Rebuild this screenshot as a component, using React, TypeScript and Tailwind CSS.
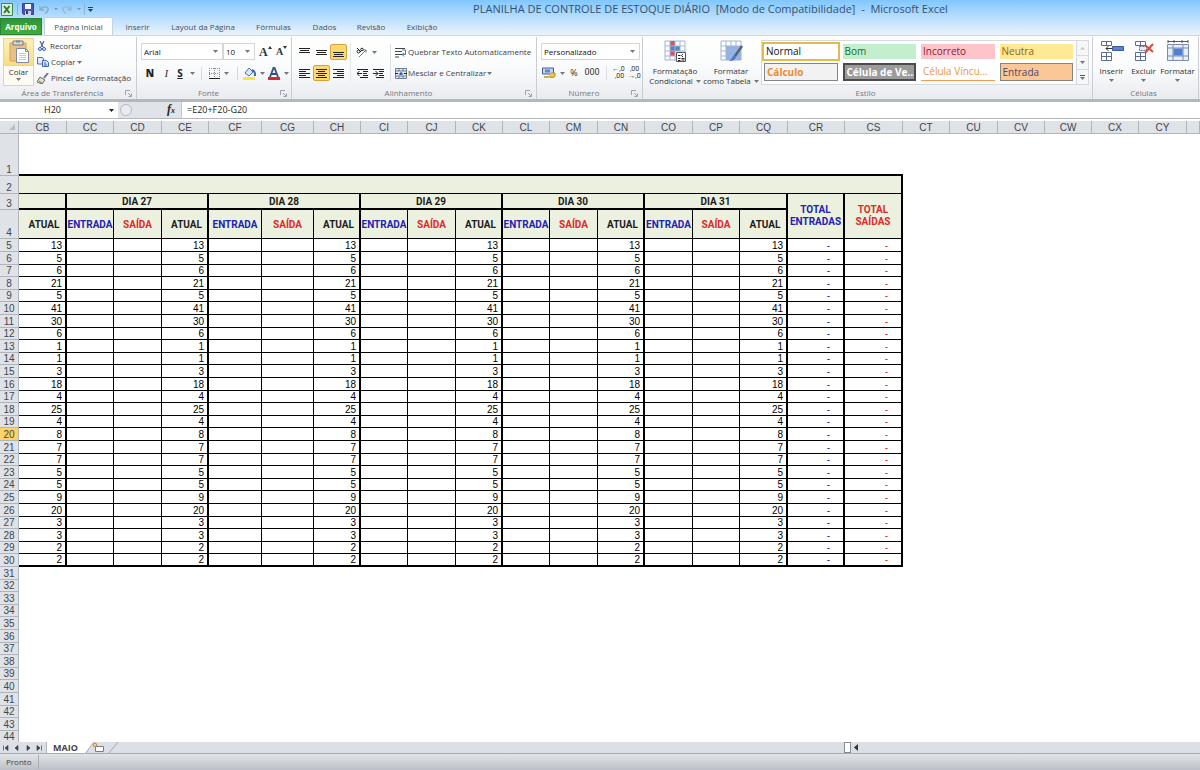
import React from "react";

type Kid = { children?: React.ReactNode };

const COLUMNS: [string, string][] = [
  ["CB", "w-[48px]"], ["CC", "w-[47px]"], ["CD", "w-[48px]"], ["CE", "w-[47px]"],
  ["CF", "w-[53px]"], ["CG", "w-[52px]"], ["CH", "w-[47px]"], ["CI", "w-[47px]"],
  ["CJ", "w-[48px]"], ["CK", "w-[47px]"], ["CL", "w-[47px]"], ["CM", "w-[48px]"],
  ["CN", "w-[47px]"], ["CO", "w-[48px]"], ["CP", "w-[47px]"], ["CQ", "w-[48px]"],
  ["CR", "w-[57px]"], ["CS", "w-[58px]"], ["CT", "w-[47px]"], ["CU", "w-[48px]"],
  ["CV", "w-[47px]"], ["CW", "w-[47px]"], ["CX", "w-[47px]"], ["CY", "w-[48px]"],
];

const STOCK = [13, 5, 6, 21, 5, 41, 30, 6, 1, 1, 3, 18, 4, 25, 4, 8, 7, 7, 5, 5, 9, 20, 3, 3, 2, 2];
const ROW_H = ["h-[13px]", "h-[13px]", "h-[12px]", "h-[13px]", "h-[12px]"];
const DAYS = [27, 28, 29, 30, 31];
const EMPTY_ROWS = Array.from({ length: 14 }, (_, i) => 31 + i);

function Caret({ dark = false }: { dark?: boolean }) {
  return (
    <svg width="5" height="3" viewBox="0 0 5 3" className="shrink-0">
      <path d="M0 0h5L2.5 3z" fill={dark ? "#222" : "#777"} />
    </svg>
  );
}

function Launcher() {
  return (
    <svg width="7" height="7" viewBox="0 0 7 7">
      <path d="M.5 5V.5H5M3 3l3 3M6.500 3.500v3h-3" fill="none" stroke="#9da2a8" />
    </svg>
  );
}

function Group({ label, width, launcher, children }: Kid & { label: string; width: string; launcher?: boolean }) {
  return (
    <section className={"flex shrink-0 flex-col border-r border-[#c9cdd2] " + width}>
      <div className="flex flex-1 items-stretch">{children}</div>
      <div className="flex h-[12px] items-center pr-[4px] text-[#74787e]">
        <h2 className="flex-1 text-center leading-[12px]">{label}</h2>
        {launcher && (
          <button aria-label={"Opções de " + label}>
            <Launcher />
          </button>
        )}
      </div>
    </section>
  );
}

function IconBtn({ label, active, width = "w-[17px]", children }: Kid & { label: string; active?: boolean; width?: string }) {
  return (
    <button
      aria-label={label}
      className={
        "flex h-[16px] shrink-0 items-center justify-center gap-1 rounded-[2px] " + width +
        (active ? " border border-[#d5a33c] bg-[#fdd96b]" : "")
      }
    >
      {children}
    </button>
  );
}

function Lines({ d }: { d: string }) {
  return (
    <svg width="11" height="10" viewBox="0 0 11 10">
      <path d={d} stroke="#222" strokeWidth="1" fill="none" />
    </svg>
  );
}

function Picker({ label, value, width }: { label: string; value: string; width: string }) {
  return (
    <div className={"relative h-[17px] border border-[#d3d6da] bg-white " + width}>
      <select aria-label={label} className="h-full w-full appearance-none bg-transparent pl-[2px] text-[#111] outline-none">
        <option>{value}</option>
      </select>
      <span className="pointer-events-none absolute top-[6px] right-[4px] flex">
        <Caret />
      </span>
    </div>
  );
}

function Grid3({ children }: Kid) {
  return (
    <svg width="24" height="24" viewBox="0 0 24 24">
      <path d="M2 1h20v19H2z" fill="#fff" stroke="#9fb4d6" />
      {children}
    </svg>
  );
}

function TitleBar() {
  return (
    <header className="flex h-[18px] items-center pl-[1px]">
      <svg width="12" height="13" viewBox="0 0 12 13">
        <path d="M.5.5h11v12H.5z" fill="#dcefd8" stroke="#3f8a45" />
        <path d="M3 3l5.500 7M8.500 3L3 10" stroke="#2c7c35" strokeWidth="2" />
      </svg>
      <i className="mx-[4px] h-[12px] w-px bg-[#8fb3d3]" />
      <button aria-label="Salvar">
        <svg width="12" height="12" viewBox="0 0 12 12">
          <path d="M.5.500h11v11h-10l-1-1z" fill="#4a55b0" stroke="#36408c" />
          <path d="M3 1h6v5H3z" fill="#f2f5fb" />
          <path d="M3 8h6v4H3z" fill="#c9cfe6" />
          <path d="M4 8h2v3H4z" fill="#2c3474" />
        </svg>
      </button>
      <div className="ml-[5px] flex items-center gap-[4px]">
        <button aria-label="Desfazer" className="flex items-center gap-[5px]">
          <svg width="10" height="9" viewBox="0 0 10 9">
            <path d="M2 4c3-4 8-2 7 1-.5 2-2 3-3 3.500M1 1v4h4" fill="none" stroke="#8ea9c8" strokeWidth="1.500" />
          </svg>
          <svg width="4" height="2"><path d="M0 0h4L2 2z" fill="#7d93ad" /></svg>
        </button>
        <button aria-label="Refazer" className="flex items-center gap-[5px]">
          <svg width="10" height="9" viewBox="0 0 10 9">
            <path d="M8 4C5 0 0 2 1 5c.5 2 2 3 3 3.500M9 1v4H5" fill="none" stroke="#9fb6d0" strokeWidth="1.500" />
          </svg>
          <svg width="4" height="2"><path d="M0 0h4L2 2z" fill="#7d93ad" /></svg>
        </button>
      </div>
      <i className="mx-[3px] h-[12px] w-px bg-[#8fb3d3]" />
      <button aria-label="Personalizar barra">
        <svg width="5" height="5"><path d="M0 .5h5" stroke="#23405e" /><path d="M0 2h5L2.500 5z" fill="#23405e" /></svg>
      </button>
      <h1 className="flex-1 pl-[128px] text-center text-[11px] leading-[18px] whitespace-pre text-[#35506e]">
        PLANILHA DE CONTROLE DE ESTOQUE DIÁRIO  [Modo de Compatibilidade]  -  Microsoft Excel
      </h1>
    </header>
  );
}

function Tabs() {
  const items: [string, string][] = [
    ["Inserir", "w-[47px]"], ["Layout da Página", "w-[84px]"], ["Fórmulas", "w-[57px]"],
    ["Dados", "w-[45px]"], ["Revisão", "w-[48px]"], ["Exibição", "w-[54px]"],
  ];
  return (
    <nav className="flex h-[18px] items-end border-b border-[#ccd6e0] text-[#4a4f57]">
      <button className="h-[17px] w-[42px] border border-[#2a8532] bg-linear-to-b from-[#2f9439] to-[#3fae3a] font-bold text-white">
        Arquivo
      </button>
      <button className="mr-px ml-[2px] h-[18px] w-[69px] rounded-t-[2px] border border-b-0 border-[#c4d2e0] bg-white">
        Página Inicial
      </button>
      {items.map(([name, w]) => (
        <button key={name} className={"h-[17px] " + w}>
          {name}
        </button>
      ))}
    </nav>
  );
}

function ClipboardGroup() {
  return (
    <Group label="Área de Transferência" width="w-[137px]" launcher>
      <div className="flex w-full gap-[3px] pt-[1px] pl-[3px]">
        <button className="flex h-[48px] w-[31px] flex-col items-center border border-[#ecd391] bg-[#fdfbf3] text-[#333]">
          <span className="flex h-[27px] w-full justify-center border-b border-[#ecd391] bg-linear-to-b from-[#fdf0c0] to-[#fbdd7c] pt-px">
            <svg width="22" height="24" viewBox="0 0 22 24">
              <path d="M2 3h16v18H2z" fill="#e8c184" stroke="#cfa468" />
              <path d="M5 1h10v4H5z" fill="#d7d9de" stroke="#777c86" />
              <path d="M8 .5h4v2H8z" fill="#85898f" />
              <path d="M8.500 8.500h9l3 3v11h-12z" fill="#fff" stroke="#7d8aa8" />
              <path d="M17.500 8.500v3h3" fill="none" stroke="#7d8aa8" />
              <path d="M11 13.500h7M11 15.500h7M11 17.500h7M11 19.500h7" stroke="#c3cde0" />
            </svg>
          </span>
          <span className="leading-[12px]">Colar</span>
          <Caret />
        </button>
        <div className="flex flex-col text-[#3c4047]">
          <button className="flex h-[16px] items-center gap-[3px]">
            <svg width="10" height="10" viewBox="0 0 10 10">
              <path d="M3 0l3 6M7 0L4 6" stroke="#50709f" strokeWidth="1.300" />
              <circle cx="3" cy="8" r="1.500" fill="none" stroke="#2c5aa6" />
              <circle cx="7" cy="8" r="1.500" fill="none" stroke="#2c5aa6" />
            </svg>
            Recortar
          </button>
          <button className="flex h-[16px] items-center gap-[2px]">
            <svg width="12" height="10" viewBox="0 0 12 10">
              <path d="M.5.500h5l1 1.500v5h-6z" fill="#e3edfa" stroke="#4d74b5" />
              <path d="M5.500 3.500h4l2 2v4h-6z" fill="#d5e4f8" stroke="#3d67ae" />
              <path d="M7 6h2M7 8h3" stroke="#3d67ae" />
            </svg>
            Copiar <Caret />
          </button>
          <button className="flex h-[16px] items-center gap-[2px] whitespace-nowrap">
            <svg width="12" height="11" viewBox="0 0 12 11">
              <path d="M11 0L7 5" stroke="#6d7788" strokeWidth="2" />
              <path d="M3 4l5 3-3 4-5-2z" fill="#e6dfc9" stroke="#6b6a62" />
              <path d="M2 8l3 2" stroke="#8d7b4e" />
            </svg>
            Pincel de Formatação
          </button>
        </div>
      </div>
    </Group>
  );
}

function FontGroup() {
  return (
    <Group label="Fonte" width="w-[155px]" launcher>
      <div className="flex w-full flex-col gap-[5px] pt-[6px] pl-[4px]">
        <div className="flex items-center">
          <Picker label="Fonte" value="Arial" width="w-[82px]" />
          <Picker label="Tamanho" value="10" width="w-[32px]" />
          <button className="ml-[4px] flex w-[14px] font-['Liberation_Serif',serif] text-[12px] leading-[16px] font-bold text-[#333]" aria-label="Aumentar fonte">
            A<svg width="4" height="3" className="mt-[2px]"><path d="M0 3h4L2 0z" fill="#333" /></svg>
          </button>
          <button className="ml-[3px] flex w-[12px] pt-px font-['Liberation_Serif',serif] text-[10px] leading-[16px] font-bold text-[#333]" aria-label="Diminuir fonte">
            A<svg width="4" height="3" className="mt-[2px]"><path d="M0 0h4L2 3z" fill="#333" /></svg>
          </button>
        </div>
        <div className="flex items-center text-[10px] text-[#222]">
          <button className="w-[18px] font-black">N</button>
          <button className="w-[15px] font-['Liberation_Serif',serif] italic">I</button>
          <button className="flex w-[24px] items-center justify-center gap-[7px] font-bold"><u>S</u><Caret /></button>
          <i className="mx-[3px] h-[13px] w-px bg-[#d5d8dc]" />
          <IconBtn label="Bordas" width="w-[28px]">
            <svg width="11" height="11" viewBox="0 0 11 11">
              <path d="M0 .5h10M0 5.500h10M.5 0v10M5.500 0v10M10.500 0v10" stroke="#888" strokeDasharray="1 1" />
              <path d="M0 10.500h11" stroke="#222" />
            </svg>
            <Caret />
          </IconBtn>
          <i className="mx-[4px] h-[13px] w-px bg-[#d5d8dc]" />
          <IconBtn label="Cor de preenchimento" width="w-[24px]">
            <svg width="13" height="13" viewBox="0 0 13 13">
              <path d="M6 1l4 4-4 4-4-3z" fill="#dce6f4" stroke="#4c6ea4" />
              <path d="M9 3c3 1 3 3 3 6" stroke="#3c66a8" fill="none" strokeWidth="2" />
              <path d="M0 10h12v3H0z" fill="#f6e83c" />
            </svg>
            <Caret />
          </IconBtn>
          <IconBtn label="Cor da fonte" width="w-[25px]">
            <svg width="12" height="13" viewBox="0 0 12 13">
              <path d="M2 10L5.500 1h1L10 10M3.500 7h5" stroke="#32508c" strokeWidth="1.800" fill="none" />
              <path d="M0 10h12v3H0z" fill="#d62a2a" />
            </svg>
            <Caret />
          </IconBtn>
        </div>
      </div>
    </Group>
  );
}

function AlignGroup() {
  return (
    <Group label="Alinhamento" width="w-[245px]" launcher>
      <div className="flex w-full pt-[7px] pl-[4px]">
        <div className="flex flex-col gap-[5px]">
          <div className="flex">
            <IconBtn label="Alinhar em cima"><Lines d="M0 1.500h11M1 3.500h9M0 5.500h11" /></IconBtn>
            <IconBtn label="Alinhar no meio"><Lines d="M0 3.500h11M1 5.500h9M0 7.500h11" /></IconBtn>
            <IconBtn label="Alinhar embaixo" active><Lines d="M0 5.500h11M1 7.500h9M0 9.500h11" /></IconBtn>
          </div>
          <div className="flex">
            <IconBtn label="Alinhar à esquerda"><Lines d="M0 1.500h11M0 3.500h7M0 5.500h11M0 7.500h7M0 9.500h11" /></IconBtn>
            <IconBtn label="Centralizar" active><Lines d="M0 1.500h11M2 3.500h7M0 5.500h11M2 7.500h7M0 9.500h11" /></IconBtn>
            <IconBtn label="Alinhar à direita"><Lines d="M0 1.500h11M4 3.500h7M0 5.500h11M4 7.500h7M0 9.500h11" /></IconBtn>
          </div>
        </div>
        <i className="mx-[3px] h-[37px] w-px bg-[#e3e5e8]" />
        <div className="flex flex-col gap-[5px]">
          <IconBtn label="Orientação" width="w-[24px]">
            <svg width="12" height="11" viewBox="0 0 12 11">
              <path d="M3 10l7-7M7.500 3H10v2.500" stroke="#777" fill="none" />
              <circle cx="2.500" cy="4.500" r="1.500" fill="none" stroke="#222" />
              <path d="M1 1l4 4" stroke="#222" />
              <circle cx="6" cy="2.500" r="1.300" fill="none" stroke="#222" />
            </svg>
            <Caret />
          </IconBtn>
          <div className="flex">
            <IconBtn label="Diminuir recuo" width="w-[16px]"><Lines d="M0 1.500h11M6 3.500h5M6 5.500h4M6 7.500h5M3 9.500h8M5 5.500H0M2.500 3L0 5.500 2.500 8" /></IconBtn>
            <IconBtn label="Aumentar recuo" width="w-[16px]"><Lines d="M0 1.500h11M6 3.500h5M6 5.500h4M6 7.500h5M3 9.500h8M5 5.500H0M2.500 3L5 5.500 2.500 8" /></IconBtn>
          </div>
        </div>
        <i className="mx-[4px] h-[37px] w-px bg-[#dcdee2]" />
        <div className="flex flex-col gap-[5px] text-[#3c4047]">
          <button className="flex h-[16px] items-center gap-[1px] whitespace-nowrap">
            <svg width="12" height="11" viewBox="0 0 12 11">
              <path d="M0 1.500h10M0 4.500h7M0 7.500h7M0 10h4" stroke="#444" />
              <path d="M7 3h3.500v4.500H7M9 6L7 7.500 9 9.500" stroke="#5a76a8" fill="none" />
            </svg>
            Quebrar Texto Automaticamente
          </button>
          <button className="flex h-[16px] items-center gap-[1px] whitespace-nowrap">
            <svg width="12" height="11" viewBox="0 0 12 11">
              <path d="M.5.500h11v10H.5z" fill="#dfe7f2" stroke="#6f7f98" />
              <path d="M.5 3h11M.5 8h11M4 .5V3M8 .5V3M4 8v2.500M8 8v2.500" stroke="#6f7f98" />
              <path d="M0 5.500h3M12 5.500H9" stroke="#222" />
              <path d="M5 7V5h2v2M5 6h2" stroke="#223f7c" fill="none" />
            </svg>
            Mesclar e Centralizar <Caret />
          </button>
        </div>
      </div>
    </Group>
  );
}

function NumberGroup() {
  return (
    <Group label="Número" width="w-[106px]" launcher>
      <div className="flex w-full flex-col gap-[5px] pt-[6px] pl-[4px]">
        <Picker label="Formato de número" value="Personalizado" width="w-[99px]" />
        <div className="flex items-center text-[#333]">
          <IconBtn label="Formato contábil" width="w-[24px]">
            <svg width="14" height="12" viewBox="0 0 14 12">
              <path d="M.5 1h11v6H.5z" fill="#c4d5ee" stroke="#3c5e9d" />
              <path d="M3 2.500h5v3H3z" fill="#6488c3" />
              <path d="M7 9a3 1.500 0 006 0V6H9" fill="#ecc84c" stroke="#b28e2c" />
              <path d="M2 10h5" stroke="#d0b04a" strokeWidth="2" />
            </svg>
            <Caret />
          </IconBtn>
          <button className="ml-[2px] w-[14px] text-[9px]">%</button>
          <button className="w-[22px] font-['Roboto',sans-serif] text-[9px]">000</button>
          <i className="mx-[3px] h-[14px] w-px bg-[#dcdee2]" />
          <button aria-label="Aumentar casas decimais" className="flex w-[17px] flex-col font-['Roboto',sans-serif] text-[7px] leading-[7px]">
            <span>←,0</span><span className="pl-[2px]">,00</span>
          </button>
          <button aria-label="Diminuir casas decimais" className="flex w-[15px] flex-col font-['Roboto',sans-serif] text-[7px] leading-[7px]">
            <span>,00</span><span>→,0</span>
          </button>
        </div>
      </div>
    </Group>
  );
}

const STYLES: [string, string][] = [
  ["Normal", "bg-white text-[#111] outline-2 outline-[#dfbc4d]"],
  ["Bom", "bg-[#c3efce] text-[#1b6b1e]"],
  ["Incorreto", "bg-[#fdc4cc] text-[#96132a]"],
  ["Neutra", "bg-[#fee994] text-[#946516]"],
  ["Cálculo", "border border-[#858585] bg-[#f2f2f2] font-bold text-[#ee8a33]"],
  ["Célula de Ve...", "border-2 border-[#4c4c4c] bg-[#9b9b9b] font-bold text-white"],
  ["Célula Víncu...", "border-b border-[#ef9a4e] text-[#e79647]"],
  ["Entrada", "border border-[#8b8378] bg-[#fbc796] text-[#4c4468]"],
];

function StyleGroup() {
  return (
    <Group label="Estilo" width="w-[450px]">
      <div className="flex w-full pt-[3px] pl-[5px]">
        <button className="flex w-[54px] flex-col items-center leading-[10px] text-[#333]">
          <Grid3>
            <path d="M7 1h5v5H7zM7 11h5v5H7z" fill="#e0525a" />
            <path d="M7 6h10v5H7z" fill="#5d7fc2" />
            <path d="M7 1v19M12 1v19M17 1v19M2 6h20M2 11h20M2 16h20" stroke="#9fb4d6" fill="none" />
            <path d="M13.500 12.500h9v9h-9z" fill="#fff" stroke="#555" />
            <path d="M15 15.500h2.500M15 18.500h2.500M15 20.500h2.500M20 14l-1.500 1.500L20 17M18.500 18.500h3M18.500 20h3" stroke="#222" fill="none" />
          </Grid3>
          <span className="pt-[2px]">Formatação</span>
          <span className="flex items-center gap-[3px]">Condicional <Caret /></span>
        </button>
        <button className="ml-px flex w-[56px] flex-col items-center leading-[10px] whitespace-nowrap text-[#333]">
          <Grid3>
            <path d="M7 6h15v14H7z" fill="#8fb2ea" />
            <path d="M7 1v19M12 1v19M17 1v19M2 6h20M2 11h20M2 16h20" stroke="#9fb4d6" fill="none" />
            <path d="M23 6l-7 10" stroke="#59626e" strokeWidth="2.500" />
            <path d="M15 15l2 2c-1 3-3 4-7 4 3-2 3-4 5-6z" fill="#4c79c4" />
          </Grid3>
          <span className="pt-[2px]">Formatar</span>
          <span className="flex items-center gap-[3px]">como Tabela <Caret /></span>
        </button>
        <div className="ml-[2px] flex h-[45px] flex-1 border border-[#d6d9dd] bg-white">
          <div className="grid flex-1 grid-cols-4 gap-x-[5px] gap-y-[4px] py-[3px] pr-[3px] pl-[2px] text-[10px] leading-[14px]">
            {STYLES.map(([name, look]) => (
              <button key={name} className={"flex items-center overflow-hidden pl-[2px] whitespace-nowrap " + look}>
                {name}
              </button>
            ))}
          </div>
          <div className="flex w-[12px] flex-col border-l border-[#d6d9dd] bg-[#f6f7f9]">
            <button aria-label="Anterior" className="flex flex-1 rotate-180 items-center justify-center opacity-40"><Caret /></button>
            <button aria-label="Próximo" className="flex flex-1 items-center justify-center border-y border-[#d6d9dd]"><Caret /></button>
            <button aria-label="Mais" className="flex flex-1 flex-col items-center justify-center gap-px">
              <i className="h-px w-[5px] bg-[#555]" />
              <Caret />
            </button>
          </div>
        </div>
        <div className="w-[3px]" />
      </div>
    </Group>
  );
}

function CellsGroup() {
  return (
    <Group label="Células" width="w-[106px]">
      <div className="flex w-full pt-[3px] pl-[2px] text-[#333]">
        <button className="flex w-[33px] flex-col items-center gap-[3px] leading-[11px]">
          <svg width="24" height="22" viewBox="0 0 24 22">
            <path d="M1.500 1.500h10v4h-10zM6.500 1.500v4M1.500 12.500h10v8h-10zM6.500 12.500v8M1.500 16.500h10" fill="#fff" stroke="#5c6f92" />
            <path d="M12.500 6.500h11v4h-11z" fill="#5c83d0" stroke="#3b5b9c" />
            <path d="M12 8.500H6M8.500 6L6 8.500 8.500 11" stroke="#333" fill="none" />
          </svg>
          Inserir <Caret />
        </button>
        <button className="flex w-[31px] flex-col items-center gap-[3px] leading-[11px]">
          <svg width="20" height="22" viewBox="0 0 20 22">
            <path d="M1.500 1.500h10v4h-10zM6.500 1.500v4M1.500 12.500h10v8h-10zM6.500 12.500v8M1.500 16.500h10" fill="#fff" stroke="#5c6f92" />
            <path d="M5.500 6.500h7v4h-7z" fill="#e3ebf8" stroke="#5c6f92" strokeDasharray="2 1" />
            <path d="M11 5l8 7M19 4l-8 9" stroke="#dc4a3c" strokeWidth="2" />
          </svg>
          Excluir <Caret />
        </button>
        <button className="flex w-[37px] flex-col items-center gap-[3px] leading-[11px]">
          <svg width="24" height="22" viewBox="0 0 24 22">
            <path d="M2 1.500h20M2 0v3M22 0v3M8 0v3M16 0v3" stroke="#4e5a70" />
            <path d="M1.500 4.500h21v16h-21z" fill="#e8eef8" stroke="#7d8ca8" />
            <path d="M7 4v16M17 4v16M1 8h21M1 16h21" stroke="#7d8ca8" />
            <path d="M7.500 8.500h9v7h-9z" fill="#4f7fd6" />
          </svg>
          Formatar <Caret />
        </button>
      </div>
    </Group>
  );
}

function FormulaBar() {
  return (
    <div className="flex h-[17px] shrink-0 border-b border-[#b4b8be] bg-[#e0e3e8] text-[#222]">
      <div className="flex w-[118px] items-center bg-white pr-[4px]">
        <input aria-label="Caixa de nome" defaultValue="H20" className="w-full min-w-0 pr-[4px] text-center text-[9px] outline-none" />
        <Caret dark />
      </div>
      <div className="flex w-[64px] items-center justify-between border-r border-[#c3c7cc] px-[2px]">
        <i className="h-[12px] w-[12px] rounded-full border border-[#b5bac1] bg-[#e9ebef]" />
        <button aria-label="Inserir função" className="pr-[4px] font-['Liberation_Serif',serif] text-[12px] leading-[14px] font-bold italic">
          f<span className="text-[8px]">x</span>
        </button>
      </div>
      <input aria-label="Barra de fórmulas" defaultValue="=E20+F20-G20" className="min-w-0 flex-1 bg-white pl-[5px] text-[9px] outline-none" />
    </div>
  );
}

const HEAD = "border-r border-b border-[#b0b5bc] bg-[#dfe2e7] font-normal text-[#42464d] p-0 ";
const THICK = "border-r-2 border-r-black ";
const THIN = "border-r border-r-black ";
const TITLE = "border-b border-b-black bg-[#ebf1de] p-0 font-['Roboto',sans-serif] font-bold ";
const INK = "text-[#1c1c1c] ";
const BLUE = "text-[#2222b4] ";
const RED = "text-[#dd2a2a] ";

function RowHead({ n, h, last }: { n: number; h: string; last?: boolean }) {
  return (
    <th
      scope="row"
      className={
        h + " border-r border-b border-[#b0b5bc] p-0 text-center font-normal text-[#42464d] " +
        (last ? "align-bottom " : "") + (n === 20 ? "bg-[#fcd364]" : "bg-[#dfe2e7]")
      }
    >
      {n}
    </th>
  );
}

function Sheet() {
  return (
    <main className="min-h-0 flex-1 overflow-hidden bg-white pt-[2px] font-['Liberation_Sans',sans-serif]">
      <table className="w-full table-fixed border-separate border-spacing-0 text-[10px] leading-[11px]">
        <colgroup>
          <col className="w-[19px]" />
          {COLUMNS.map(([c, w]) => <col key={c} className={w} />)}
          <col />
        </colgroup>
        <thead>
          <tr className="h-[13px]">
            <th className={HEAD + "pr-[3px]"} aria-label="Selecionar tudo">
              <svg width="6" height="6" className="ml-auto"><path d="M6 0v6H0z" fill="#b9bdc4" /></svg>
            </th>
            {COLUMNS.map(([c]) => <th key={c} scope="col" className={HEAD}>{c}</th>)}
            <th className={HEAD} />
          </tr>
        </thead>
        <tbody>
          <tr>
            <RowHead n={1} h="h-[42px]" last />
            <td colSpan={18} className="border-b-2 border-black p-0" />
            <td colSpan={7} className="p-0" />
          </tr>
          <tr>
            <RowHead n={2} h="h-[18px]" last />
            <td colSpan={18} className={TITLE + THICK} />
            <td colSpan={7} className="p-0" />
          </tr>
          <tr>
            <RowHead n={3} h="h-[16px]" last />
            <td className={TITLE + THICK + "border-b-2"} />
            {DAYS.map((d) => (
              <th key={d} colSpan={3} className={TITLE + THICK + INK + "border-b-2"}>DIA {d}</th>
            ))}
            <th rowSpan={2} className={TITLE + THICK + BLUE + "leading-[12px]"}>TOTAL ENTRADAS</th>
            <th rowSpan={2} className={TITLE + THICK + RED + "leading-[12px]"}>TOTAL SAÍDAS</th>
            <td colSpan={7} className="p-0" />
          </tr>
          <tr>
            <RowHead n={4} h="h-[29px]" last />
            <th className={TITLE + THICK + INK + "pl-[4px]"}>ATUAL</th>
            {DAYS.map((d) => (
              <React.Fragment key={d}>
                <th className={TITLE + THIN + BLUE}>ENTRADA</th>
                <th className={TITLE + THIN + RED}>SAÍDA</th>
                <th className={TITLE + THICK + INK + "pl-[4px]"}>ATUAL</th>
              </React.Fragment>
            ))}
            <td colSpan={7} className="p-0" />
          </tr>
          {STOCK.map((v, i) => {
            const line = (i === STOCK.length - 1 ? "border-b-2 " : "border-b ") + "border-b-black p-0 text-right ";
            return (
              <tr key={i}>
                <RowHead n={i + 5} h={ROW_H[i % 5]} />
                <td className={line + THICK + "pr-[3px]"}>{v}</td>
                {DAYS.map((d) => (
                  <React.Fragment key={d}>
                    <td className={line + THIN} />
                    <td className={line + THIN} />
                    <td className={line + THICK + "pr-[3px]"}>{v}</td>
                  </React.Fragment>
                ))}
                <td className={line + THICK + BLUE + "pr-[13px]"}>-</td>
                <td className={line + THICK + RED + "pr-[13px]"}>-</td>
                <td colSpan={7} className="p-0" />
              </tr>
            );
          })}
          {EMPTY_ROWS.map((n) => (
            <tr key={n}>
              <RowHead n={n} h={ROW_H[(n - 5) % 5]} />
              <td colSpan={25} className="p-0" />
            </tr>
          ))}
        </tbody>
      </table>
    </main>
  );
}

function SheetTabs() {
  const arrows: [string, string][] = [
    ["Primeira", "M1.500 1.500v5M6 1.500v5L3 4z"], ["Anterior", "M5 1.500v5L2 4z"],
    ["Próxima", "M3 1.500v5L6 4z"], ["Última", "M6.500 1.500v5M2 1.500v5L5 4z"],
  ];
  return (
    <footer className="shrink-0">
      <div className="flex h-[12px] items-stretch border-b border-[#a6abb3] bg-[#dce0e6]">
        <div className="flex w-[47px] items-center justify-around border-r border-[#b0b5bc] pr-px">
          {arrows.map(([l, d]) => (
            <button key={l} aria-label={l}>
              <svg width="8" height="8" viewBox="0 0 8 8"><path d={d} fill="#3d4249" stroke="#3d4249" strokeWidth=".7" /></svg>
            </button>
          ))}
        </div>
        <button className="bg-white px-[6px] text-[9px] leading-[12px] font-bold text-[#444]">MAIO</button>
        <svg width="38" height="12" viewBox="0 0 38 12">
          <path d="M0 0h10L0 12z" fill="#fff" />
          <path d="M10 0L1 12M34 0L24 12" stroke="#a4a9b1" fill="none" />
          <path d="M11.500 4.500h8v5h-8z" fill="#fff" stroke="#777e8a" />
          <circle cx="11" cy="3" r="1.800" fill="#f3d493" stroke="#c48a35" />
        </svg>
        <div className="flex-1" />
        <div className="flex w-[29.7%] items-center gap-[3px]">
          <i className="h-[11px] w-[7px] border border-[#868b93] bg-white" />
          <svg width="4" height="7"><path d="M4 0v7L0 3.500z" fill="#333" /></svg>
        </div>
      </div>
      <div className="flex h-[16px] items-center bg-linear-to-b from-[#e2e5e9] to-[#bcc0c6] pl-[6px] text-[#3c4047]">
        <span className="border-r border-[#a9aeb6] pr-[7px] leading-[14px]">Pronto</span>
      </div>
    </footer>
  );
}

export default function App() {
  return (
    <div className="flex h-screen flex-col overflow-hidden font-['Open_Sans',sans-serif] text-[8px]">
      <div className="shrink-0 bg-linear-to-b from-[#80c6ff] via-[#b9dffd] to-[#edf4fa]">
        <TitleBar />
        <Tabs />
      </div>
      <div className="flex h-[66px] shrink-0 overflow-hidden border-b-3 border-[#b3b8be] bg-linear-to-b from-white via-[#fafbfc] to-[#e9ebef] pt-px">
        <ClipboardGroup />
        <FontGroup />
        <AlignGroup />
        <NumberGroup />
        <StyleGroup />
        <CellsGroup />
      </div>
      <FormulaBar />
      <Sheet />
      <SheetTabs />
    </div>
  );
}
